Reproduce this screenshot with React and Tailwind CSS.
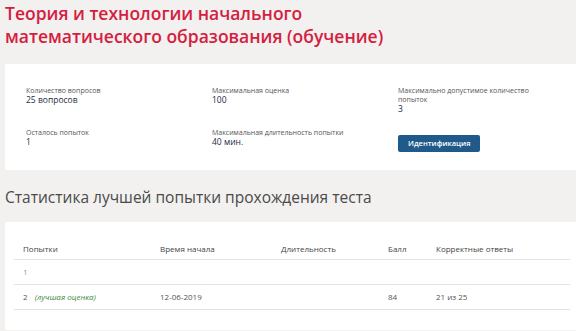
import React from "react";

const info = [
  { label: "Количество вопросов", value: "25 вопросов" },
  { label: "Максимальная оценка", value: "100" },
  { label: "Максимально допустимое количество попыток", value: "3" },
];

function Field({ label, value }) {
  return (
    <div>
      <div className="text-[7px] leading-[9px] text-[#555] max-w-[140px]">{label}</div>
      <div className="text-[8.5px] leading-[10px] text-[#1c2b44]">{value}</div>
    </div>
  );
}

export default function App() {
  return (
    <div
      className="min-h-screen bg-[#f2f1ef] pb-4"
      style={{ fontFamily: '"Open Sans", "Noto Sans", sans-serif' }}
    >
      {/* title */}
      <h1 className="pl-[5px] pt-[2px] text-[17.5px] leading-[23px] font-semibold text-[#d4203f]">
        Теория и технологии начального
        <br />
        математического образования (обучение)
      </h1>

      {/* info card */}
      <div className="ml-[5px] mt-[16px] bg-white pl-[21px] pt-[22px] pb-[18px]">
        <div className="grid grid-cols-[186px_186px_1fr] gap-y-[14px]">
          {info.map((f) => (
            <Field key={f.label} {...f} />
          ))}
          <Field label="Осталось попыток" value="1" />
          <Field label="Максимальная длительность попытки" value="40 мин." />
          <div>
            <button className="h-[17px] px-[10px] rounded-[2px] bg-[#1f5a8b] text-white text-[7.5px] font-semibold leading-[17px]">
              Идентификация
            </button>
          </div>
        </div>
      </div>

      {/* stats heading */}
      <h2 className="pl-[5px] mt-[16px] text-[15.5px] leading-[22px] text-[#4a4a4a]">
        Статистика лучшей попытки прохождения теста
      </h2>

      {/* table card */}
      <div className="ml-[5px] mt-[14px] bg-white pt-[16px] pl-[9px] pr-[6px] pb-[20px]">
        <div className="text-[8px] text-[#555]">
          <div className="flex h-[22px] items-center border-b border-[#e2e2e2] text-[#444]">
            <div className="w-[137px] pl-[9px]">Попытки</div>
            <div className="w-[121px] pl-[9px]">Время начала</div>
            <div className="w-[107px] pl-[9px]">Длительность</div>
            <div className="w-[48px] pl-[9px]">Балл</div>
            <div className="flex-1 pl-[9px]">Корректные ответы</div>
          </div>
          <div className="flex h-[25px] items-center border-b border-[#e2e2e2] text-[#999]">
            <div className="w-[137px] pl-[9px]">1</div>
          </div>
          <div className="flex h-[25px] items-center border-b border-[#e2e2e2]">
            <div className="w-[137px] pl-[9px]">
              2 <span className="ml-[5px] italic text-[#3c8a3c]">(лучшая оценка)</span>
            </div>
            <div className="w-[121px] pl-[9px]">12-06-2019</div>
            <div className="w-[107px] pl-[9px]"></div>
            <div className="w-[48px] pl-[9px]">84</div>
            <div className="flex-1 pl-[9px]">21 из 25</div>
          </div>
        </div>
      </div>
    </div>
  );
}
